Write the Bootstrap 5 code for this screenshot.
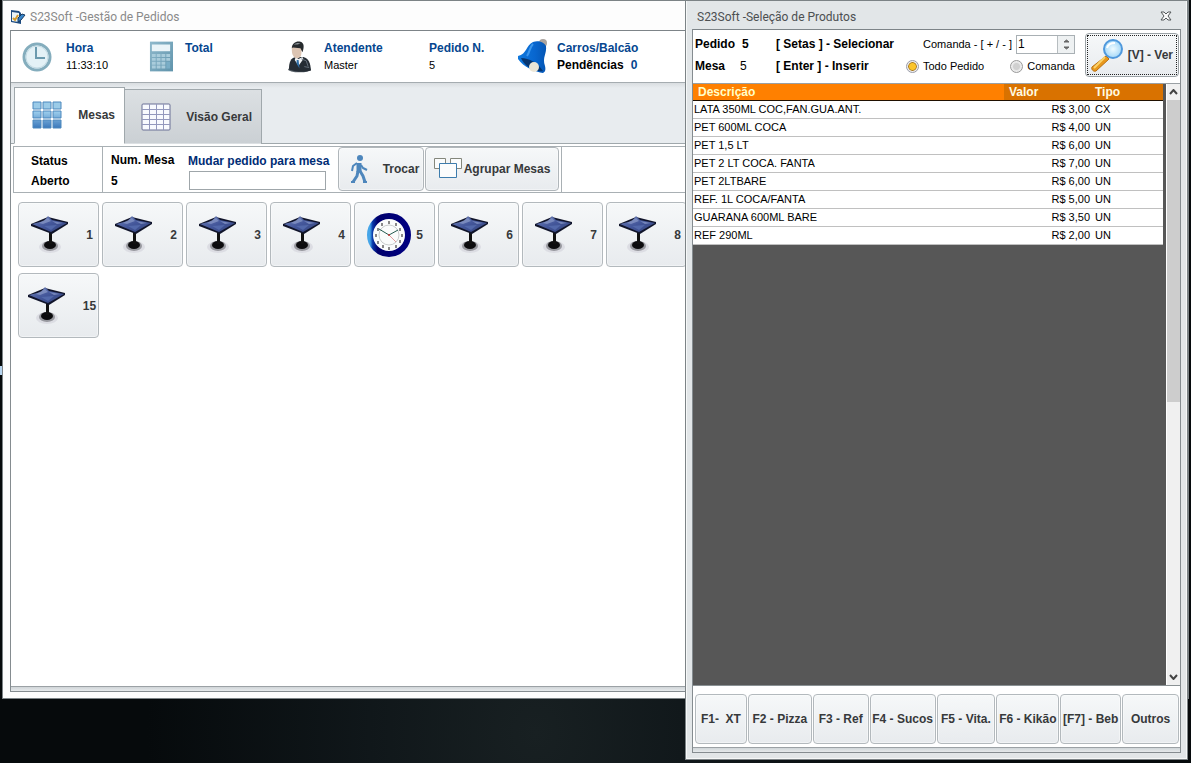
<!DOCTYPE html>
<html lang="pt-BR">
<head>
<meta charset="utf-8">
<meta name="viewport" content="width=device-width, initial-scale=1">
<title>S23Soft - Gestão de Pedidos</title>
<link href="https://cdn.jsdelivr.net/npm/bootstrap@5.3.0/dist/css/bootstrap.min.css" rel="stylesheet">
<style>
  body{font:11px/16px "Liberation Sans",Arial,sans-serif;color:#000;background:#070b0d;height:100vh;overflow:hidden}
  b,.strong-text{font-size:12px;font-weight:700}
  svg{flex:none;display:block}
  .desktop{height:100%;background:radial-gradient(ellipse at 45% 96%,#182022 0,#10171a 18%,#060a0c 42%)}
  .edge-mark{position:absolute;left:0;top:48%;width:2px;height:9px;background:#b5d3ee}
  /* windows */
  .win{position:absolute;top:0;border:1px solid #7c8386;display:flex;flex-direction:column}
  .win-main{left:2px;right:2px;bottom:64px;background:#fdfdfd;padding:0 6px 6px 7px}
  .win-prod{left:685px;right:3px;bottom:3px;background:#e2e6e8;padding:0 6px 6px 6px;box-shadow:inset 1px 0 #f6f8f8,inset -1px -1px #f6f8f8}
  .win-title{font:12px/16px Roboto,"Open Sans",sans-serif;color:#8a8a8a}
  .win-main .win-title{height:29px;padding:3px 0 0}
  .win-prod .win-title{height:28px;color:#4c4f51;padding:3px 8px 0 5px}
  .win-body{border:1px solid #858c90;border-top-color:#7d8488;flex:1;min-height:0}
  .foot-strip{height:5px;border-top:1px solid #9ba1a5;background:linear-gradient(#d0d5d8,#e6eaec)}
  /* summary */
  .summary{height:52px;border-bottom:1px solid #a5acb0;padding:0 11px;background:#fff}
  .summary .lbl,.caption-blue{color:#05468f}
  .caption-blue{color:#002d75}
  .c-127{width:127px;gap:14px}.c-139{width:139px}.c-141{width:141px}.c-88{width:88px}
  .two-lines{line-height:17px}
  /* tabs */
  .tab-band{height:61px;background:linear-gradient(#d9dde0,#e8ecef 5px);border-bottom:1px solid #a0a8ac;padding-left:3px}
  .tab-btn{border:1px solid #a0a8ac;color:#37393b;font-size:12px;font-weight:700;padding:0;border-radius:0}
  .tab-btn.on{width:111px;height:57px;background:#fff;border-bottom-color:#fff;margin-bottom:-1px;padding:0 9px 2px 17px}
  .tab-btn.off{width:137px;height:55px;border-left:0;border-bottom-color:transparent;margin-bottom:-1px;background:linear-gradient(#dce0e3,#cbd0d4);padding:1px 9px 0 16px}
  /* toolbar */
  .tool-row{height:47px;border:1px solid #a9b0b4;border-right:0;margin:2px 0 0 2px}
  .tool-row>.cell{border-right:1px solid #a9b0b4}
  .status-cell{width:89px;padding:4px 0 0 17px;line-height:20px}
  .num-cell{width:77px;line-height:21px;padding:3px 0 0}
  .field{height:19px;width:137px;border:1px solid #9fa6aa;padding:0 3px;margin-left:1px;border-radius:0;font-size:11px}
  .dest-cell{padding-top:4px;margin-right:9px}
  .dest-cell label{line-height:20px}
  .soft{border:1px solid #b3b9bd;border-radius:4px;background:linear-gradient(#f6f8f9,#e8ebee);color:#37393b;font-size:12px;font-weight:700;padding:0;white-space:nowrap;box-shadow:inset 0 0 0 1px #ffffff66}
  .tool-btn{height:44px;border-color:#b0b6ba}
  .w-trocar{width:86px}
  .w-agrupar{width:134px;margin:0 2px 0 1px}
  .tile{width:81px;height:65px}
  .tiles{padding:9px 0 0 7px}
  .tile-line{gap:3px;margin-bottom:6px}
  /* products */
  .prod-head{height:53px;line-height:22px;padding:3px 1px 0 2px}
  .c-81{width:81px}.c-130{width:130px}.grow-c{flex:1}
  .spin{width:59px;height:19px;border:1px solid #a9b0b4;background:#fff}
  .spin input{width:40px;border:0;padding:0 0 0 1px;font-size:12px;line-height:16px;outline:0}
  .spin .arrows{flex:1;border-left:1px solid #b7bdc0;background:#eef1f2}
  .opt{appearance:none;width:13px;height:13px;border-radius:50%;border:1px solid #999;background:radial-gradient(#d0d0d0 0 3px,#e6e6e6 4px);margin:0;box-shadow:inset 0 0 0 1px #eee}
  .opt:checked{border-color:#999ba8;background:radial-gradient(#fbc52c 0 3px,#a9791c 4px,#f3f3f3 5px)}
  .ver{height:44px;width:94px;border-color:#9ba2a6;margin-left:10px}
  .ver span{outline:1px dotted #222;outline-offset:-1px;margin:1px}
  .grid-area{flex:1;min-height:0;background:#575757;border-top:1px solid #9aa0a4;border-bottom:1px solid #8a9194}
  .prod-table{width:calc(100% - 3px);table-layout:fixed;border-collapse:separate;border-spacing:0;background:#fff;font-size:11px;line-height:17px}
  .prod-table th,.prod-table td{padding:0 1px;height:18px;border-bottom:1px solid #c0c0c0;white-space:nowrap}
  .prod-table th{font-size:12px;height:17px;line-height:16px;background:#d97200;color:#fffbe2;border-bottom-color:#201000;padding:0 5px}
  .prod-table th:first-child{background:#ff8000;color:#ffffc8}
  .prod-table td:nth-child(2){text-align:right}
  .col-v{width:87px}.col-t{width:72px}
  .sbar{width:14px;flex:none;background:#f0f0f0;border-left:1px solid #fff}
  .sbar .arrow{height:16px;display:grid;place-items:center}
  .sbar .thumb{height:53%;background:#cdcdcd}
  .fkeys{display:grid;grid-template-columns:52fr 64fr 56fr 66fr 59fr 63fr 61fr 57fr;gap:1px;padding:8px 1px 3px 2px}
  .fkeys .soft{height:50px;overflow:hidden}
</style>
</head>
<body>
<svg width="0" height="0" class="position-absolute" aria-hidden="true">
  <defs>
    <linearGradient id="gTop" x1="0" y1="0" x2="1" y2="1"><stop offset="0" stop-color="#7284b9"/><stop offset=".5" stop-color="#43569a"/><stop offset="1" stop-color="#35457d"/></linearGradient>
    <linearGradient id="gCell" x1="0" y1="0" x2="0" y2="1"><stop offset="0" stop-color="#9fd0ee"/><stop offset="1" stop-color="#3b78bb"/></linearGradient>
    <linearGradient id="gCalc" x1="0" y1="0" x2="1" y2="1"><stop offset="0" stop-color="#8fb9cc"/><stop offset="1" stop-color="#5f93ab"/></linearGradient>
    <linearGradient id="gRing" x1="0" y1="0" x2="1" y2="0"><stop offset="0" stop-color="#45a5e8"/><stop offset=".07" stop-color="#0838a8"/><stop offset=".2" stop-color="#00006c"/><stop offset="1" stop-color="#000080"/></linearGradient>
    <linearGradient id="gBell" x1="0" y1="0" x2="1" y2="0"><stop offset="0" stop-color="#0f78dd"/><stop offset=".6" stop-color="#0866cf"/><stop offset="1" stop-color="#0556b4"/></linearGradient>
    <radialGradient id="gLens"><stop offset="0" stop-color="#effbff"/><stop offset="1" stop-color="#a4d8f8"/></radialGradient>
    <symbol id="mesa" viewBox="0 0 48 48">
      <ellipse cx="26" cy="38" rx="11" ry="6" fill="#dcdde3"/><ellipse cx="26" cy="37" rx="8" ry="5" fill="#97989e"/>
      <ellipse cx="26" cy="36" rx="6" ry="4" fill="#0c0c0e"/><path d="M25 22h3v13h-3z" fill="#111"/>
      <path d="M7 15l17-7 20 5v2l-16 10L7 17z" fill="#10142a"/>
      <path d="M8 15l12-3 4-5 4 4 15 3-16 9z" fill="url(#gTop)"/><path d="M15 14l9-5 3 3-8 3zM28 12l5 3 6-1z" fill="#8b9bc9" opacity=".7"/><path d="M20 17l13-1-6 5z" fill="#5268aa"/>
    </symbol>
  </defs>
</svg>

<div class="desktop position-relative overflow-hidden">
  <div class="edge-mark"></div>
  <main class="win win-main">
    <div class="win-title d-flex align-items-center gap-1">
      <svg width="16" height="16" viewBox="0 0 16 16"><path d="M1 1l8 1 2 2v11l-10-2z" fill="#1c4a80"/><path d="M2 3l7 1v9l-7-1z" fill="#e9f3f7"/><path d="M3 9l2 2 3-5" fill="none" stroke="#d39a2c" stroke-width="2"/><path d="M8 9l4-4 3 1-4 5-3 2z" fill="#3684c9" stroke="#18395f"/></svg>
      <span>S23Soft -Gestão de Pedidos</span>
    </div>
    <div class="win-body d-flex flex-column bg-white">
      <section class="summary d-flex align-items-center two-lines">
        <div class="c-127 d-flex align-items-center">
          <svg width="30" height="30" viewBox="0 0 30 30"><circle cx="15" cy="15" r="13" fill="#e3f1f6" stroke="#84adbd" stroke-width="3"/><circle cx="15" cy="15" r="11" fill="none" stroke="#c3dbe4"/><path d="M14 5v11h9" fill="none" stroke="#6b9aae" stroke-width="2"/></svg>
          <div><b class="lbl d-block">Hora</b>11:33:10</div>
        </div>
        <div class="c-139 d-flex align-items-center">
          <svg width="24" height="31" viewBox="0 0 25 31"><path d="M1 0h24v31H1z" fill="url(#gCalc)"/><path d="M3 3h19v7H3z" fill="#eaf4f8"/><g fill="#a9ccdb"><path d="M3 13h4v3H3zM8 13h4v3H8zM13 13h4v3h-4zM18 13h4v3h-4zM3 17h4v3H3zM8 17h4v3H8zM13 17h4v3h-4zM18 17h4v3h-4zM3 21h4v3H3zM8 21h4v3H8zM13 21h4v3h-4zM3 25h4v3H3zM8 25h4v3H8zM13 25h4v3h-4z"/></g><path d="M18 21h4v7h-4z" fill="#79adc6"/></svg>
          <div class="ps-1 ms-2"><b class="lbl d-block">Total</b>&nbsp;</div>
        </div>
        <div class="c-141 d-flex align-items-center">
          <svg width="24" height="34" viewBox="0 0 25 34"><ellipse cx="12" cy="30" rx="12" ry="3" fill="#555e66"/><path d="M1 30c0-8 2-12 7-13h8c6 2 7 6 8 14-7 2-15 2-23-1z" fill="#252c34"/><path d="M8 17l3 2 4-2 1 2-5 7-4-6z" fill="#f0f2f4"/><path d="M9 20l2 0 1 9-3-5z" fill="#2f6fa8"/><path d="M4 6h10v7c0 4-3 6-6 5-3-1-4-5-4-8z" fill="#dcc4b2"/><path d="M4 8c0-6 5-8 9-7 4 1 4 6 2 11l-2-4-8-1z" fill="#262a2d"/><path d="M6 4c3-2 5-2 7-1l-3 1z" fill="#8d9498"/><path d="M14 19l5 2 2 6M17 27l5 1" fill="none" stroke="#66717c"/></svg>
          <div class="ps-1 ms-2"><b class="lbl d-block">Atendente</b>Master</div>
        </div>
        <div class="c-88"><b class="lbl d-block">Pedido N.</b>5</div>
        <div class="d-flex align-items-center">
          <svg width="32" height="35" viewBox="0 0 32 35"><circle cx="26" cy="4" r="4" fill="#aaa39e"/><path d="M1 17c9-2 8-11 15-14 5-2 11 0 13 4 1 8-4 11-1 20 1 4 0 6-2 7C19 33 6 28 1 20z" fill="url(#gBell)"/><path d="M4 19c8 0 17 5 22 13-8 2-19-5-22-13z" fill="#06356f"/><path d="M16 5c-4 4-3 8-6 12" fill="none" stroke="#3c96ec" stroke-width="2"/><circle cx="17" cy="28" r="5" fill="#ece6d6"/></svg>
          <div class="ms-2"><b class="lbl d-block">Carros/Balcão</b><b>Pendências</b> <b class="lbl ms-1">0</b></div>
        </div>
      </section>

      <nav class="tab-band d-flex align-items-end" role="tablist" aria-label="Seções">
        <button class="tab-btn on d-flex align-items-center justify-content-between" role="tab" aria-selected="true">
          <svg width="31" height="28" viewBox="0 0 31 28"><g fill="url(#gCell)" stroke="#4d88bd"><path d="M1 1h8v7H1zM11 1h8v7h-8zM21 1h8v7h-8z" fill="#9bcbe8"/><path d="M1 10h8v7H1zM11 10h8v7h-8zM21 10h8v7h-8zM1 19h8v8H1zM11 19h8v8h-8zM21 19h8v8h-8z"/></g></svg>
          Mesas
        </button>
        <button class="tab-btn off d-flex align-items-center justify-content-between" role="tab" aria-selected="false">
          <svg width="31" height="28" viewBox="0 0 31 28"><rect x="1" y="1" width="28" height="26" rx="1" fill="#f8fafe" stroke="#6b7096"/><path d="M8.500 1v26M15.500 1v26M22.500 1v26M1 6.500h28M1 11.500h28M1 16.500h28M1 21.500h28" stroke="#9398bd" fill="none"/></svg>
          Visão Geral
        </button>
      </nav>

      <section class="tool-row d-flex flex-shrink-0">
        <div class="cell status-cell"><b class="d-block">Status</b><b class="d-block">Aberto</b></div>
        <div class="cell d-flex ps-2">
          <div class="num-cell"><b class="d-block">Num. Mesa</b><b class="d-block">5</b></div>
          <div class="dest-cell"><label for="dest" class="strong-text caption-blue d-block">Mudar pedido para mesa</label><input id="dest" class="field d-block"></div>
          <button class="soft tool-btn w-trocar d-flex align-items-center justify-content-between ps-2 pe-1">
            <svg width="24" height="30" viewBox="0 0 24 30"><g fill="none" stroke="#4d86bc" stroke-linejoin="round"><path d="M12 9v9" stroke-width="5"/><path d="M11 17l-1 5-4 6M13 17l3 5 2 6" stroke-width="3"/><path d="M10 9l-4 3-1 5M14 11l2 3 4 2" stroke-width="2"/><path d="M4 28h4M16 28h4" stroke-width="2"/></g><circle cx="13" cy="4" r="3" fill="#4d86bc"/></svg>
            <span>Trocar</span>
          </button>
          <button class="soft tool-btn w-agrupar d-flex align-items-center justify-content-between px-2">
            <svg width="28" height="22" viewBox="0 0 28 22"><g fill="#fbfcfc" stroke="#84877c"><path d="M.5.5h11v10H.5zM16.500.5h11v10h-11z"/><path d="M5.500 5.500h17v14h-17z" stroke="#3d7cad"/></g></svg>
            Agrupar Mesas
          </button>
        </div>
      </section>

      <section class="tiles flex-grow-1 overflow-hidden">
        <div class="d-flex tile-line" id="linha1"></div>
        <div class="d-flex tile-line" id="linha2"></div>
      </section>
      <div class="foot-strip"></div>
    </div>
  </main>

  <section class="win win-prod" role="dialog" aria-label="Seleção de Produtos">
    <div class="win-title d-flex align-items-center justify-content-between">
      <span>S23Soft -Seleção de Produtos</span>
      <button class="border-0 bg-transparent p-0" aria-label="Fechar"><svg width="13" height="11" viewBox="0 0 13 11"><path d="M1 1h3l2 2 2-2h3L8 5l3 4H8L6 7 4 9H1l3-4z" fill="#fafafa" stroke="#55595b"/></svg></button>
    </div>
    <div class="win-body d-flex flex-column bg-white">
      <form class="prod-head d-flex" onsubmit="return false">
        <div class="c-81"><div><b>Pedido</b> <b class="ms-1">5</b></div><div><b>Mesa</b> <span class="strong-text fw-normal ms-2 ps-1">5</span></div></div>
        <div class="c-130"><b class="d-block">[ Setas ] - Selecionar</b><b class="d-block">[ Enter ] - Inserir</b></div>
        <div class="grow-c">
          <div class="d-flex align-items-center justify-content-end gap-1">
            <label for="cmd">Comanda - [ + / - ]</label>
            <div class="spin d-flex"><input id="cmd" value="1"><div class="arrows d-flex align-items-center justify-content-center"><svg width="7" height="11" viewBox="0 0 7 11"><path d="M1 3l2.500-2L6 3zM1 8l2.500 2L6 8z" fill="#666" stroke="#666"/></svg></div></div>
          </div>
          <div class="d-flex align-items-center justify-content-between">
            <label class="d-flex align-items-center gap-1"><input class="opt" type="radio" name="alvo" checked>Todo Pedido</label>
            <label class="d-flex align-items-center gap-1"><input class="opt" type="radio" name="alvo">Comanda</label>
          </div>
        </div>
        <button class="soft ver d-flex align-items-stretch">
          <span class="d-flex align-items-center justify-content-between flex-grow-1 px-1">
          <svg width="32" height="34" viewBox="0 0 32 34"><path d="M15 18l3 3L5 33c-3 1-5-2-4-4z" fill="#e8981c" stroke="#b86f10"/><path d="M14 19L3 30" stroke="#fbd36a" stroke-width="2"/><circle cx="22" cy="11" r="9" fill="url(#gLens)" stroke="#4f98dc" stroke-width="2"/><path d="M16 10c1-4 4-5 8-5" fill="none" stroke="#fff" stroke-width="2"/></svg>
          [V] - Ver</span>
        </button>
      </form>

      <div class="grid-area d-flex">
        <div class="flex-grow-1 overflow-hidden">
          <table class="prod-table">
            <colgroup><col><col class="col-v"><col class="col-t"></colgroup>
            <thead><tr><th>Descrição</th><th>Valor</th><th class="ps-1">Tipo</th></tr></thead>
            <tbody>
              <tr><td>LATA 350ML COC,FAN.GUA.ANT.</td><td>R$ 3,00</td><td class="ps-1">CX</td></tr>
              <tr><td>PET 600ML COCA</td><td>R$ 4,00</td><td class="ps-1">UN</td></tr>
              <tr><td>PET 1,5 LT</td><td>R$ 6,00</td><td class="ps-1">UN</td></tr>
              <tr><td>PET 2 LT COCA. FANTA</td><td>R$ 7,00</td><td class="ps-1">UN</td></tr>
              <tr><td>PET 2LTBARE</td><td>R$ 6,00</td><td class="ps-1">UN</td></tr>
              <tr><td>REF. 1L COCA/FANTA</td><td>R$ 5,00</td><td class="ps-1">UN</td></tr>
              <tr><td>GUARANA 600ML BARE</td><td>R$ 3,50</td><td class="ps-1">UN</td></tr>
              <tr><td>REF 290ML</td><td>R$ 2,00</td><td class="ps-1">UN</td></tr>
            </tbody>
          </table>
        </div>
        <div class="sbar d-flex flex-column">
          <div class="arrow"><svg width="9" height="6" viewBox="0 0 9 6"><path d="M1 5l3.500-4L8 5" fill="none" stroke="#444" stroke-width="2"/></svg></div>
          <div class="flex-grow-1"><div class="thumb"></div></div>
          <div class="arrow"><svg width="9" height="6" viewBox="0 0 9 6"><path d="M1 1l3.500 4L8 1" fill="none" stroke="#444" stroke-width="2"/></svg></div>
        </div>
      </div>

      <div class="fkeys">
        <button class="soft">F1-&nbsp; XT</button><button class="soft">F2 - Pizza</button><button class="soft">F3 - Ref</button><button class="soft">F4 - Sucos</button><button class="soft">F5 - Vita.</button><button class="soft">F6 - Kikão</button><button class="soft">[F7] - Beb</button><button class="soft">Outros</button>
      </div>
      <div class="foot-strip"></div>
    </div>
  </section>
</div>

<script src="https://cdn.jsdelivr.net/npm/bootstrap@5.3.0/dist/js/bootstrap.bundle.min.js"></script>
<script>
  const mesaIcon = '<svg width="48" height="48" class="mb-1"><use href="#mesa"/></svg>';
  /* dial marks are laid out on a circle around the clock centre */
  let marks = '';
  for (let h = 1; h <= 12; h++) {
    const a = h * Math.PI / 6;
    const x = Math.round(23 + 13 * Math.sin(a)), y = Math.round(23 - 13 * Math.cos(a));
    marks += `<path d="M${x - 1} ${y - 1}h2v3h-2z" fill="#888"/>`;
  }
  const clockIcon = `<svg width="46" height="46" viewBox="0 0 46 46"><circle cx="23" cy="23" r="19" fill="#fafcfc" stroke="url(#gRing)" stroke-width="6"/><circle cx="23" cy="23" r="10" fill="none" stroke="#c8cccc"/>${marks}<path d="M13 17l10 6 9-5" fill="none" stroke="#255b50" stroke-width="1"/><path d="M23 23l7 7" stroke="#e09a9a"/><circle cx="23" cy="23" r="1" fill="#b33"/></svg>`;
  const tile = (n, busy) => `<button class="soft tile d-flex align-items-center justify-content-center flex-shrink-0" style="gap:${busy ? 4 : 14}px">${busy ? clockIcon : mesaIcon}${n}</button>`;
  document.getElementById('linha1').innerHTML = [1,2,3,4,5,6,7,8].map(n => tile(n, n === 5)).join('');
  document.getElementById('linha2').innerHTML = tile(15, false);
</script>
</body>
</html>
